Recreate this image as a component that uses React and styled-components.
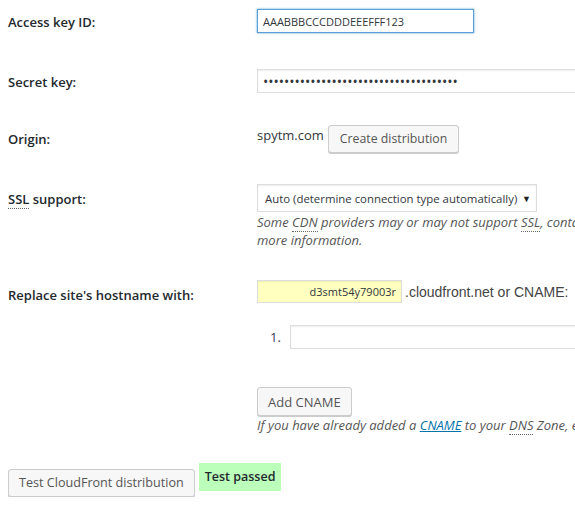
import React from "react";
import styled, { createGlobalStyle } from "styled-components";

const Global = createGlobalStyle`
  html, body { margin: 0; padding: 0; background: #fff; overflow: hidden; }
  body { font-family: "Open Sans", "Noto Sans", sans-serif; color: #23282d; font-size: 13px; }
`;

const Page = styled.div`
  padding: 0 0 0 8px;
  width: 900px;
`;

const Row = styled.div`
  display: grid;
  grid-template-columns: 249px 1fr;
  align-items: start;
  margin-top: ${(p) => p.$mt}px;
`;

const Label = styled.div`
  font-weight: 600;
  font-size: 13px;
  line-height: 18px;
  padding-top: ${(p) => p.$pt}px;
  color: #23282d;
`;

const Field = styled.div`
  display: flex;
  flex-direction: column;
  align-items: flex-start;
`;

const Inline = styled.div`
  display: flex;
  align-items: ${(p) => p.$align || "center"};
  gap: ${(p) => p.$gap || 0}px;
`;

const TextInput = styled.input`
  box-sizing: border-box;
  height: ${(p) => p.$h || 24}px;
  width: ${(p) => p.$w}px;
  border: 1px solid ${(p) => (p.$focus ? "#5b9dd9" : "#ddd")};
  box-shadow: ${(p) => (p.$focus ? "0 0 2px rgba(30,140,190,.8)" : "inset 0 1px 2px rgba(0,0,0,.07)")};
  background: ${(p) => p.$bg || "#fff"};
  font-family: "Open Sans", sans-serif;
  font-size: ${(p) => p.$fs || 11}px;
  color: #32373c;
  padding: 0 ${(p) => p.$px ?? 5}px;
  margin: 0;
  text-align: ${(p) => (p.$right ? "right" : "left")};
  outline: none;
`;

const Button = styled.button`
  box-sizing: border-box;
  height: ${(p) => p.$h || 28}px;
  padding: 0 ${(p) => p.$px || 10}px;
  border: 1px solid #ccc;
  border-radius: 3px;
  background: #f7f7f7;
  box-shadow: 0 1px 0 #ccc;
  color: #555;
  font-family: "Open Sans", sans-serif;
  font-size: ${(p) => p.$fs || 13}px;
  line-height: 26px;
  margin: 0;
  cursor: pointer;
`;

const Plain = styled.span`
  font-size: 13px;
  line-height: 18px;
  color: #32373c;
`;

const ArialText = styled.span`
  font-family: "Liberation Sans", Arial, sans-serif;
  font-size: 14px;
  color: #444;
  margin-left: 3px;
`;

const FakeSelect = styled.div`
  box-sizing: border-box;
  height: 28px;
  width: 280px;
  border: 1px solid #ddd;
  box-shadow: inset 0 1px 2px rgba(0,0,0,.07);
  display: flex;
  align-items: center;
  justify-content: space-between;
  padding: 0 5px 0 7px;
  font-size: 11.4px;
  white-space: nowrap;
  color: #32373c;
`;

const Arrow = styled.span`
  font-size: 9px;
  color: #222;
`;

const Desc = styled.p`
  margin: ${(p) => p.$mt ?? 1}px 0 0;
  font-style: italic;
  font-size: 13px;
  line-height: 18px;
  color: #555;
  white-space: nowrap;
`;

const Abbr = styled.abbr`
  text-decoration: none;
  border-bottom: 1px dotted #666;
`;

const Link = styled.a`
  color: #0073aa;
  text-decoration: underline;
`;

const ListItem = styled.div`
  display: flex;
  align-items: center;
  margin-left: 13px;
`;

const Num = styled.span`
  width: 20px;
  font-size: 13px;
  color: #3a3560;
`;

const Bottom = styled.div`
  display: flex;
  align-items: flex-start;
  gap: 4px;
  margin-top: 29px;
`;

const Passed = styled.div`
  background: #bbffbb;
  height: 28px;
  line-height: 28px;
  padding: 0 6px;
  font-weight: 600;
  font-size: 12.5px;
  color: #23282d;
`;

const Shift = styled.div`
  margin-top: ${(p) => p.$mt}px;
`;

export default function App() {
  return (
    <>
      <Global />
      <Page>
        <Row $mt={9}>
          <Label $pt={4}>Access key ID:</Label>
          <Field>
            <TextInput $w={217} $focus defaultValue="AAABBBCCCDDDEEEFFF123" />
          </Field>
        </Row>
        <Row $mt={36}>
          <Label $pt={4}>Secret key:</Label>
          <Field>
            <TextInput $w={400} $fs={14} type="password" defaultValue="aaaaaaaaaaaaaaaaaaaaaaaaaaaaaaaaaaaaa" />
          </Field>
        </Row>
        <Row $mt={32}>
          <Label $pt={5}>Origin:</Label>
          <Field>
            <Inline $align="flex-start" $gap={4}>
              <Shift $mt={1}><Plain>spytm.com</Plain></Shift>
              <Button $fs={12.3} $px={11}>Create distribution</Button>
            </Inline>
          </Field>
        </Row>
        <Row $mt={31}>
          <Label $pt={6}><Abbr title="Secure Sockets Layer">SSL</Abbr> support:</Label>
          <Field>
            <FakeSelect>
              <span>Auto (determine connection type automatically)</span>
              <Arrow>▼</Arrow>
            </FakeSelect>
            <Desc>
              Some <Abbr title="Content Delivery Network">CDN</Abbr> providers may or may not support <Abbr title="Secure Sockets Layer">SSL</Abbr>, contact your provider for<br />
              more information.
            </Desc>
          </Field>
        </Row>
        <Row $mt={31}>
          <Label $pt={6}>Replace site's hostname with:</Label>
          <Field>
            <Inline>
              <TextInput $w={145} $h={23} $bg="#ffffc0" $right defaultValue="d3smt54y79003r" />
              <ArialText>.cloudfront.net or CNAME:</ArialText>
            </Inline>
            <Shift $mt={22}>
              <ListItem>
                <Num>1.</Num>
                <TextInput $w={400} />
              </ListItem>
            </Shift>
            <Shift $mt={38}>
              <Button $h={29}>Add CNAME</Button>
            </Shift>
            <Desc $mt={0}>
              If you have already added a <Link href="#">CNAME</Link> to your <Abbr title="Domain Name System">DNS</Abbr> Zone, enter it here.
            </Desc>
          </Field>
        </Row>
        <Bottom>
          <Shift $mt={6}><Button $fs={12.6}>Test CloudFront distribution</Button></Shift>
          <Passed>Test passed</Passed>
        </Bottom>
      </Page>
    </>
  );
}
